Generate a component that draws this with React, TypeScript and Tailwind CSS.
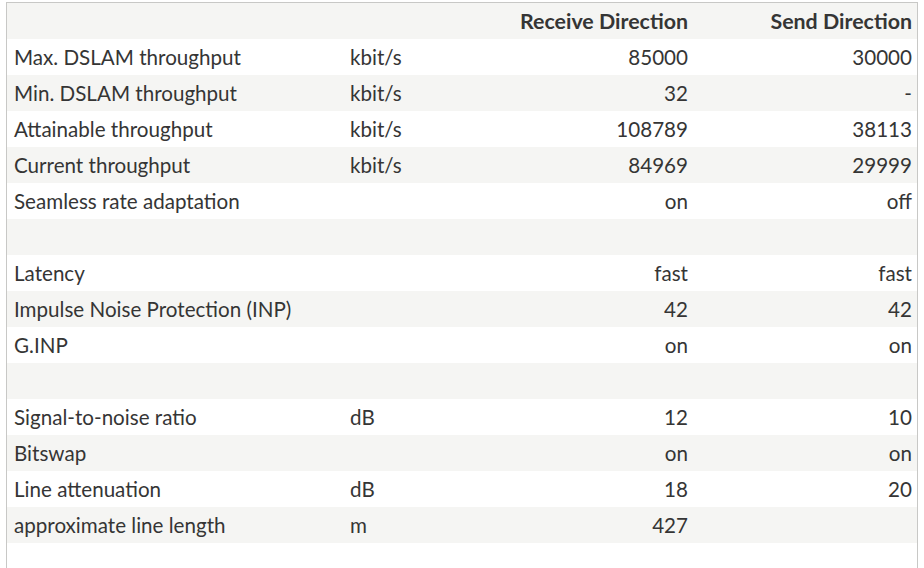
import React from "react";

type Row = { label: string; unit: string; rx: string; tx: string } | null;

const rows: Row[] = [
  { label: "Max. DSLAM throughput", unit: "kbit/s", rx: "85000", tx: "30000" },
  { label: "Min. DSLAM throughput", unit: "kbit/s", rx: "32", tx: "-" },
  { label: "Attainable throughput", unit: "kbit/s", rx: "108789", tx: "38113" },
  { label: "Current throughput", unit: "kbit/s", rx: "84969", tx: "29999" },
  { label: "Seamless rate adaptation", unit: "", rx: "on", tx: "off" },
  null,
  { label: "Latency", unit: "", rx: "fast", tx: "fast" },
  { label: "Impulse Noise Protection (INP)", unit: "", rx: "42", tx: "42" },
  { label: "G.INP", unit: "", rx: "on", tx: "on" },
  null,
  { label: "Signal-to-noise ratio", unit: "dB", rx: "12", tx: "10" },
  { label: "Bitswap", unit: "", rx: "on", tx: "on" },
  { label: "Line attenuation", unit: "dB", rx: "18", tx: "20" },
  { label: "approximate line length", unit: "m", rx: "427", tx: "" },
];

export default function App() {
  return (
    <div
      className="w-[924px] h-[568px] overflow-hidden bg-white pt-[2px] pl-[6px]"
      style={{ fontFamily: "Lato, 'Liberation Sans', sans-serif" }}
    >
      <div className="w-[912px] h-[600px] border border-[#c8c8c6] text-[20.6px] text-[#353535]">
        <div className="grid grid-cols-[336px_150px_201px_1fr] h-[36px] items-center bg-[#f5f5f3] font-bold text-[21.4px]">
          <div />
          <div />
          <div className="text-right pr-[6px] whitespace-nowrap">Receive Direction</div>
          <div className="text-right pr-[5px] whitespace-nowrap">Send Direction</div>
        </div>
        {rows.map((r, i) => (
          <div
            key={i}
            className={`grid grid-cols-[336px_150px_201px_1fr] h-[36px] items-center ${
              i % 2 === 1 ? "bg-[#f5f5f3]" : "bg-white"
            }`}
          >
            <div className="pl-[7px] whitespace-nowrap">{r ? r.label : ""}</div>
            <div className="pl-[7px]">{r ? r.unit : ""}</div>
            <div className="text-right pr-[6px]">{r ? r.rx : ""}</div>
            <div className="text-right pr-[5px]">{r ? r.tx : ""}</div>
          </div>
        ))}
      </div>
    </div>
  );
}
